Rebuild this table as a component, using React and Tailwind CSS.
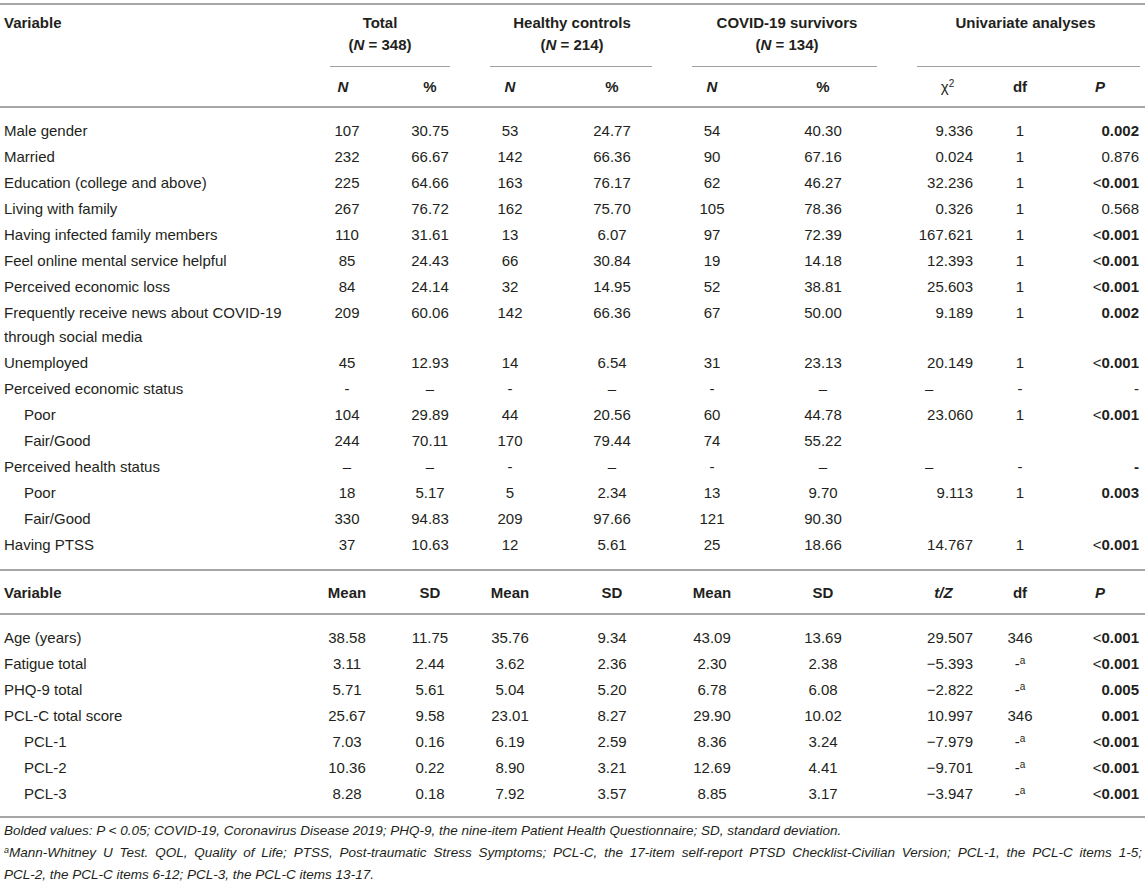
import React from "react";

const GRID =
  "grid grid-cols-[306px_82px_84px_76px_128px_72px_150px_87px_70px_90px]";

const sec1 = [
  ["Male gender", 0, "107", "30.75", "53", "24.77", "54", "40.30", "9.336", "1", "*0.002"],
  ["Married", 0, "232", "66.67", "142", "66.36", "90", "67.16", "0.024", "1", "0.876"],
  ["Education (college and above)", 0, "225", "64.66", "163", "76.17", "62", "46.27", "32.236", "1", "*<0.001"],
  ["Living with family", 0, "267", "76.72", "162", "75.70", "105", "78.36", "0.326", "1", "0.568"],
  ["Having infected family members", 0, "110", "31.61", "13", "6.07", "97", "72.39", "167.621", "1", "*<0.001"],
  ["Feel online mental service helpful", 0, "85", "24.43", "66", "30.84", "19", "14.18", "12.393", "1", "*<0.001"],
  ["Perceived economic loss", 0, "84", "24.14", "32", "14.95", "52", "38.81", "25.603", "1", "*<0.001"],
  ["FREQ", 0, "209", "60.06", "142", "66.36", "67", "50.00", "9.189", "1", "*0.002"],
  ["Unemployed", 0, "45", "12.93", "14", "6.54", "31", "23.13", "20.149", "1", "*<0.001"],
  ["Perceived economic status", 0, "-", "\u2013", "-", "\u2013", "-", "\u2013", "\u2013", "-", "-"],
  ["Poor", 1, "104", "29.89", "44", "20.56", "60", "44.78", "23.060", "1", "*<0.001"],
  ["Fair/Good", 1, "244", "70.11", "170", "79.44", "74", "55.22", "", "", ""],
  ["Perceived health status", 0, "\u2013", "\u2013", "-", "\u2013", "-", "\u2013", "\u2013", "-", "*-"],
  ["Poor", 1, "18", "5.17", "5", "2.34", "13", "9.70", "9.113", "1", "*0.003"],
  ["Fair/Good", 1, "330", "94.83", "209", "97.66", "121", "90.30", "", "", ""],
  ["Having PTSS", 0, "37", "10.63", "12", "5.61", "25", "18.66", "14.767", "1", "*<0.001"],
];

const sec2 = [
  ["Age (years)", 0, "38.58", "11.75", "35.76", "9.34", "43.09", "13.69", "29.507", "346", "*<0.001"],
  ["Fatigue total", 0, "3.11", "2.44", "3.62", "2.36", "2.30", "2.38", "\u22125.393", "-a", "*<0.001"],
  ["PHQ-9 total", 0, "5.71", "5.61", "5.04", "5.20", "6.78", "6.08", "\u22122.822", "-a", "*0.005"],
  ["PCL-C total score", 0, "25.67", "9.58", "23.01", "8.27", "29.90", "10.02", "10.997", "346", "*0.001"],
  ["PCL-1", 1, "7.03", "0.16", "6.19", "2.59", "8.36", "3.24", "\u22127.979", "-a", "*<0.001"],
  ["PCL-2", 1, "10.36", "0.22", "8.90", "3.21", "12.69", "4.41", "\u22129.701", "-a", "*<0.001"],
  ["PCL-3", 1, "8.28", "0.18", "7.92", "3.57", "8.85", "3.17", "\u22123.947", "-a", "*<0.001"],
];

function PCell({ v }) {
  if (!v) return <div />;
  if (v[0] === "*") {
    const s = v.slice(1);
    if (s[0] === "<") {
      return (
        <div className="text-right pr-[6px]">
          <span>&lt;</span>
          <span className="font-bold">{s.slice(1)}</span>
        </div>
      );
    }
    return <div className="text-right pr-[6px] font-bold">{s}</div>;
  }
  return <div className="text-right pr-[6px]">{v}</div>;
}

function StatCell({ v }) {
  if (!v) return <div />;
  if (v === "\u2013") return <div className="text-left pl-[27px]">{v}</div>;
  return <div className="text-right pr-[12px]">{v}</div>;
}

function DfCell({ v }) {
  if (!v) return <div />;
  if (v === "-a")
    return (
      <div className="text-center">
        -<sup className="text-[10px]">a</sup>
      </div>
    );
  return <div className="text-center">{v}</div>;
}

function Row({ r }) {
  const [label, indent, ...vals] = r;
  return (
    <div className={GRID + " py-px leading-[24px]"}>
      <div className={indent ? "pl-[24px]" : "pl-[4px]"}>
        {label === "FREQ" ? (
          <>
            Frequently receive news about COVID-19
            <br />
            through social media
          </>
        ) : (
          label
        )}
      </div>
      {vals.slice(0, 6).map((v, i) => (
        <div key={i} className="text-center">
          {v}
        </div>
      ))}
      <StatCell v={vals[6]} />
      <DfCell v={vals[7]} />
      <PCell v={vals[8]} />
    </div>
  );
}

function Line() {
  return <div className="h-[2px] bg-[#a6a6a6]" />;
}

function Group({ title, n, sub, pad }) {
  return (
    <div>
      <div className={"text-center font-bold leading-[22px] " + pad}>{title}</div>
      <div className={"text-center font-bold leading-[22px] h-[22px] " + pad}>
        {n ? (
          <>
            (<i>N</i> = {n})
          </>
        ) : null}
      </div>
      <div className={"mt-[10px] h-px bg-[#a0a0a0] " + sub} />
    </div>
  );
}

export default function App() {
  return (
    <div className="w-[1145px] h-[885px] bg-white overflow-hidden text-[15px] text-[#231f20] font-['Liberation_Sans',Arial,sans-serif]">
      <div className="pt-[3px]">
        <Line />
      </div>
      <div className={GRID + " pt-[7px]"}>
        <div className="pl-[4px] font-bold leading-[22px]">Variable</div>
        <div className="col-span-2">
          <Group title="Total" n="348" sub="ml-[24px] mr-[22px]" pad="pr-[18px]" />
        </div>
        <div className="col-span-2">
          <Group title="Healthy controls" n="214" sub="ml-[18px] mr-[24px]" pad="pr-[4px]" />
        </div>
        <div className="col-span-2">
          <Group title="COVID-19 survivors" n="134" sub="ml-[16px] mr-[21px]" pad="" />
        </div>
        <div className="col-span-3">
          <Group title="Univariate analyses" n="" sub="ml-[19px] mr-[5px]" pad="pl-[8px]" />
        </div>
      </div>
      <div className={GRID + " pt-[9px] pb-[8px] leading-[22px] font-bold"}>
        <div />
        <div className="text-center pr-[8px]"><i>N</i></div>
        <div className="text-center">%</div>
        <div className="text-center"><i>N</i></div>
        <div className="text-center">%</div>
        <div className="text-center"><i>N</i></div>
        <div className="text-center">%</div>
        <div className="text-center pl-[12px] font-normal">
          χ<sup className="text-[10px]">2</sup>
        </div>
        <div className="text-center">df</div>
        <div className="text-center"><i>P</i></div>
      </div>
      <Line />
      <div className="pt-[10px] pb-[11px]">
        {sec1.map((r, i) => (
          <Row key={i} r={r} />
        ))}
      </div>
      <Line />
      <div className={GRID + " pt-[10px] pb-[8px] leading-[24px] font-bold"}>
        <div className="pl-[4px]">Variable</div>
        <div className="text-center">Mean</div>
        <div className="text-center">SD</div>
        <div className="text-center">Mean</div>
        <div className="text-center">SD</div>
        <div className="text-center">Mean</div>
        <div className="text-center">SD</div>
        <div className="text-center pl-[4px]"><i>t/Z</i></div>
        <div className="text-center">df</div>
        <div className="text-center"><i>P</i></div>
      </div>
      <Line />
      <div className="pt-[10px] pb-[9px]">
        {sec2.map((r, i) => (
          <Row key={i} r={r} />
        ))}
      </div>
      <Line />
      <div className="pt-[2px] pl-[4px] pr-[3px] italic text-[13.5px] leading-[22px] whitespace-nowrap">
        <div>
          Bolded values: P &lt; 0.05; COVID-19, Coronavirus Disease 2019; PHQ-9, the nine-item Patient Health Questionnaire; SD, standard deviation.
        </div>
        <div className="text-justify [text-align-last:justify]">
          <sup className="text-[9px]">a</sup>Mann-Whitney U Test. QOL, Quality of Life; PTSS, Post-traumatic Stress Symptoms; PCL-C, the 17-item self-report PTSD Checklist-Civilian Version; PCL-1, the PCL-C items 1-5;
        </div>
        <div>PCL-2, the PCL-C items 6-12; PCL-3, the PCL-C items 13-17.</div>
      </div>
    </div>
  );
}
